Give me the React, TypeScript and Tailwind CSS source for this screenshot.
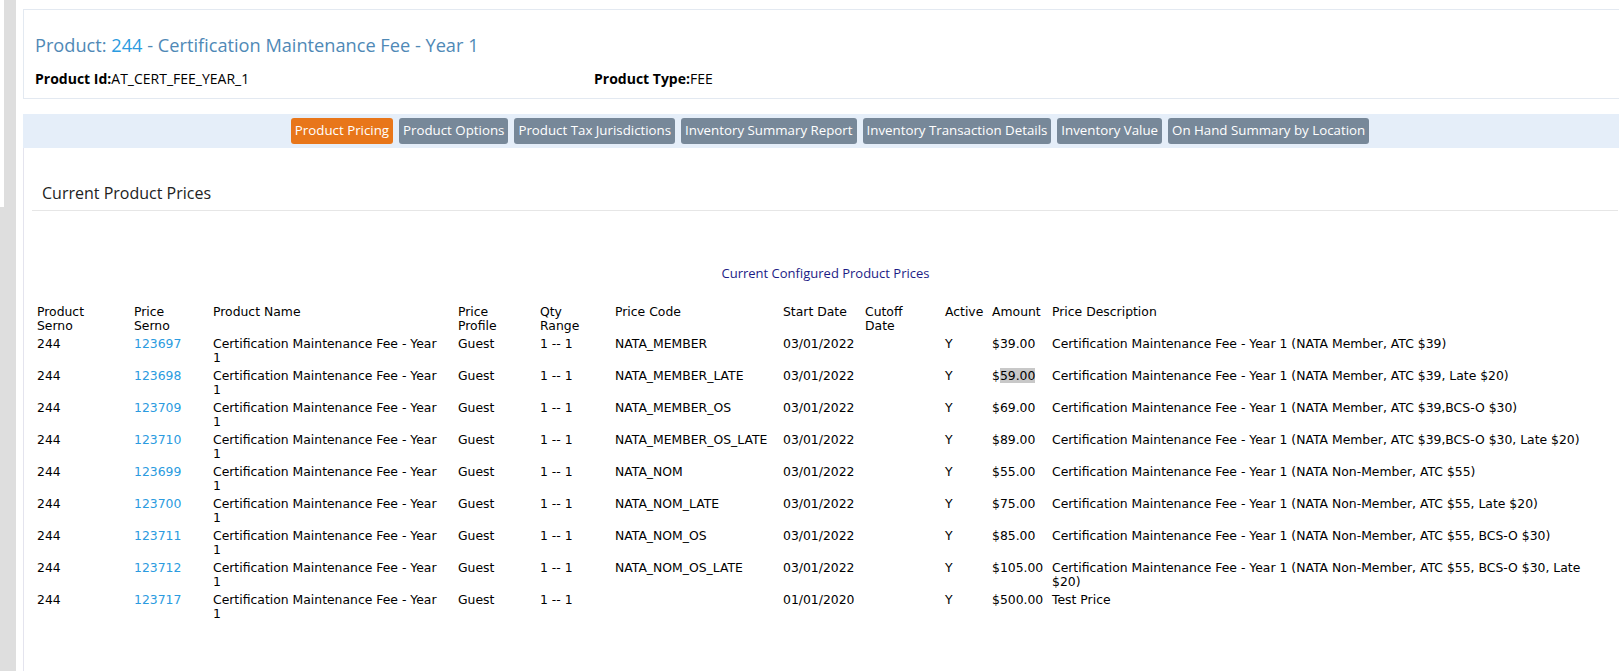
import React from "react";

const tabs = [
  { label: "Product Pricing", active: true },
  { label: "Product Options" },
  { label: "Product Tax Jurisdictions" },
  { label: "Inventory Summary Report" },
  { label: "Inventory Transaction Details" },
  { label: "Inventory Value" },
  { label: "On Hand Summary by Location" },
];

const name = "Certification Maintenance Fee - Year 1";

const prices = [
  { serno: "123697", code: "NATA_MEMBER", start: "03/01/2022", amount: "$39.00", desc: `${name} (NATA Member, ATC $39)` },
  { serno: "123698", code: "NATA_MEMBER_LATE", start: "03/01/2022", amount: "$59.00", desc: `${name} (NATA Member, ATC $39, Late $20)`, selected: true },
  { serno: "123709", code: "NATA_MEMBER_OS", start: "03/01/2022", amount: "$69.00", desc: `${name} (NATA Member, ATC $39,BCS-O $30)` },
  { serno: "123710", code: "NATA_MEMBER_OS_LATE", start: "03/01/2022", amount: "$89.00", desc: `${name} (NATA Member, ATC $39,BCS-O $30, Late $20)` },
  { serno: "123699", code: "NATA_NOM", start: "03/01/2022", amount: "$55.00", desc: `${name} (NATA Non-Member, ATC $55)` },
  { serno: "123700", code: "NATA_NOM_LATE", start: "03/01/2022", amount: "$75.00", desc: `${name} (NATA Non-Member, ATC $55, Late $20)` },
  { serno: "123711", code: "NATA_NOM_OS", start: "03/01/2022", amount: "$85.00", desc: `${name} (NATA Non-Member, ATC $55, BCS-O $30)` },
  { serno: "123712", code: "NATA_NOM_OS_LATE", start: "03/01/2022", amount: "$105.00", desc: `${name} (NATA Non-Member, ATC $55, BCS-O $30, Late $20)` },
  { serno: "123717", code: "", start: "01/01/2020", amount: "$500.00", desc: "Test Price" },
];

const ui = "font-['Segoe_UI','Open_Sans',sans-serif]";
const grid = "font-['Tahoma','DejaVu_Sans',sans-serif] text-[12.4px] leading-[14px]";

export default function App() {
  return (
    <div className="flex h-[671px] w-full overflow-hidden bg-white">
      {/* scroll gutter */}
      <div className="flex w-[16px] shrink-0 flex-col">
        <div className="ml-[4px] h-[207px] bg-[#dedede]" />
        <div className="flex-1 bg-[#dedede]" />
      </div>
      <div className="w-[7px] shrink-0" />

      <div className={`w-[1614px] shrink-0 ${ui}`}>
        <div className="mt-[9px] border border-[#e3e9f1] pl-[11px] pt-[23px] pb-[10px]">
          <h1 className="text-[18.2px] leading-[24px] text-[#4f89b6]">
            Product: <span className="text-[#2b9be0]">244</span> - Certification Maintenance Fee - Year 1
          </h1>
          <div className="mt-[12px] flex text-[14px] leading-[19px] text-black">
            <div className="w-[559px]">
              <b>Product Id:</b>AT_CERT_FEE_YEAR_1
            </div>
            <div>
              <b>Product Type:</b>FEE
            </div>
          </div>
        </div>

        <div className="mt-[15px] flex h-[34px] items-center justify-center gap-[6px] bg-[#e5eef9]">
          {tabs.map((t) => (
            <div
              key={t.label}
              className={`flex h-[26px] items-center rounded-[3px] px-[4px] text-[13.3px] text-white ${
                t.active ? "bg-[#e8761a]" : "bg-[#778899]"
              }`}
            >
              {t.label}
            </div>
          ))}
        </div>

        <div className="h-[600px] border-l border-[#e4e4ee]">
          <div className="ml-[8px] mr-[19px] border-b border-[#e6e6e6] pt-[34px] pb-[6px] pl-[10px] text-[16px] leading-[22px] text-[#222]">
            Current Product Prices
          </div>

          <div className="mt-[53px] pr-[10px] text-center text-[13px] leading-[18px] text-[#1c1c86]">
            Current Configured Product Prices
          </div>

          <table className={`ml-[11px] mt-[21px] w-[1560px] table-fixed border-collapse text-black ${grid}`}>
            <colgroup>
              <col className="w-[97px]" />
              <col className="w-[79px]" />
              <col className="w-[245px]" />
              <col className="w-[82px]" />
              <col className="w-[75px]" />
              <col className="w-[168px]" />
              <col className="w-[82px]" />
              <col className="w-[80px]" />
              <col className="w-[47px]" />
              <col className="w-[60px]" />
              <col />
            </colgroup>
            <thead>
              <tr className="text-left align-top">
                <th className="p-[2px] font-normal">Product<br />Serno</th>
                <th className="p-[2px] font-normal">Price<br />Serno</th>
                <th className="p-[2px] font-normal">Product Name</th>
                <th className="p-[2px] font-normal">Price<br />Profile</th>
                <th className="p-[2px] font-normal">Qty<br />Range</th>
                <th className="p-[2px] font-normal">Price Code</th>
                <th className="p-[2px] font-normal">Start Date</th>
                <th className="p-[2px] font-normal">Cutoff<br />Date</th>
                <th className="p-[2px] font-normal">Active</th>
                <th className="p-[2px] font-normal">Amount</th>
                <th className="p-[2px] font-normal">Price Description</th>
              </tr>
            </thead>
            <tbody>
              {prices.map((p) => (
                <tr key={p.serno} className="h-[32px] align-top">
                  <td className="p-[2px]">244</td>
                  <td className="p-[2px] text-[#2b9be0]">{p.serno}</td>
                  <td className="p-[2px]">
                    <div className="w-[232px]">{name}</div>
                  </td>
                  <td className="p-[2px]">Guest</td>
                  <td className="p-[2px]">1 -- 1</td>
                  <td className="p-[2px]">{p.code}</td>
                  <td className="p-[2px]">{p.start}</td>
                  <td className="p-[2px]"></td>
                  <td className="p-[2px]">Y</td>
                  <td className="p-[2px] whitespace-nowrap">
                    {p.selected ? (
                      <>
                        $<span className="bg-[#c8c8c8]">{p.amount.slice(1)}</span>
                      </>
                    ) : (
                      p.amount
                    )}
                  </td>
                  <td className="p-[2px]">
                    <div className="w-[540px]">{p.desc}</div>
                  </td>
                </tr>
              ))}
            </tbody>
          </table>
        </div>
      </div>
    </div>
  );
}
